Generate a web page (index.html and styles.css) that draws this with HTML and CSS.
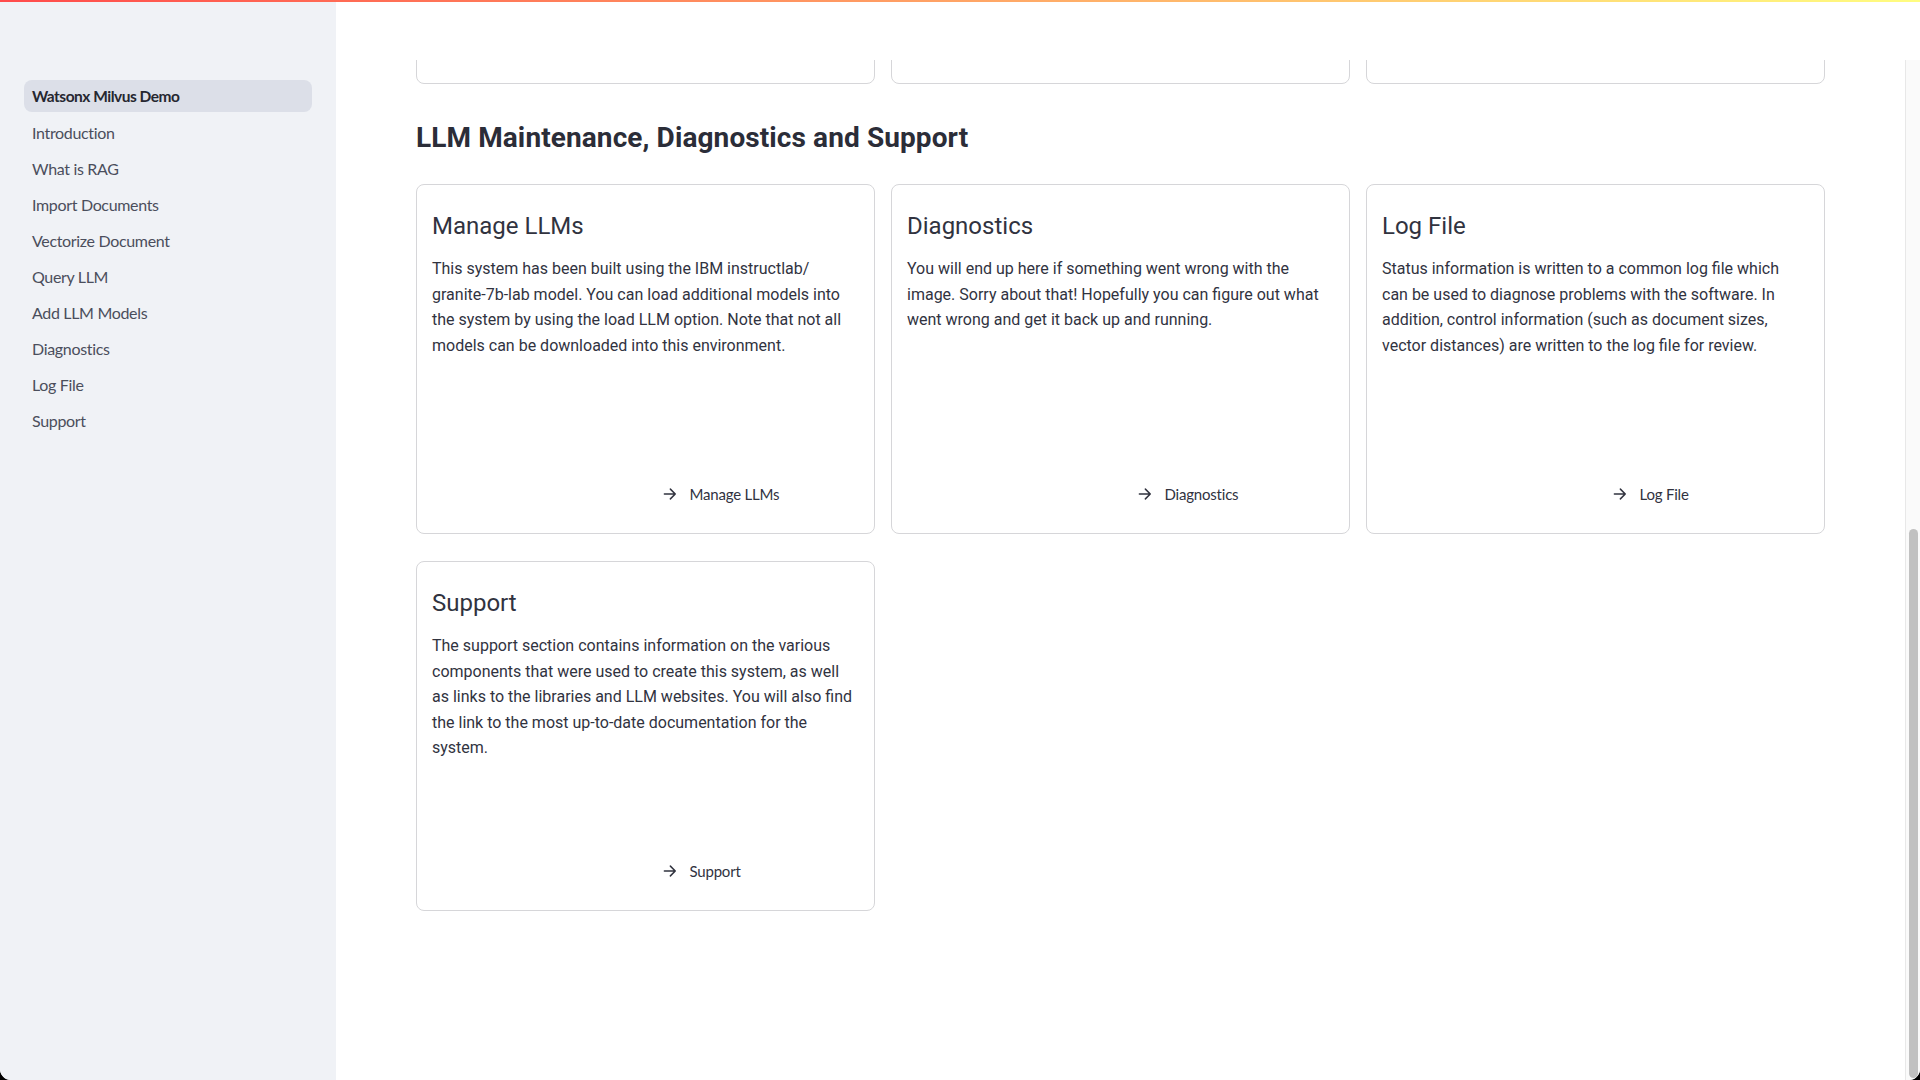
FILE: index.html
```html
<!DOCTYPE html>
<html lang="en">
<head>
<meta charset="utf-8">
<title>Watsonx Milvus Demo</title>
<link rel="stylesheet" href="styles.css">
</head>
<body>
<div class="app">
  <div class="decoration"></div>
  <aside class="sidebar">
    <nav class="nav">
      <a class="nav-item active">Watsonx Milvus Demo</a>
      <a class="nav-item">Introduction</a>
      <a class="nav-item">What is RAG</a>
      <a class="nav-item">Import Documents</a>
      <a class="nav-item">Vectorize Document</a>
      <a class="nav-item">Query LLM</a>
      <a class="nav-item">Add LLM Models</a>
      <a class="nav-item">Diagnostics</a>
      <a class="nav-item">Log File</a>
      <a class="nav-item">Support</a>
    </nav>
  </aside>
  <div class="main">
    <main class="viewport">
      <div class="block">
        <div class="row">
          <section class="card"></section>
          <section class="card"></section>
          <section class="card"></section>
        </div>

        <h2 class="section-title">LLM Maintenance, Diagnostics and Support</h2>

        <div class="row">
          <section class="card">
            <h3 class="card-title">Manage LLMs</h3>
            <div class="card-body"><p>This system has been built using the IBM instructlab/<wbr>granite-7b-lab model. You can load additional models into the system by using the load LLM option. Note that not all models can be downloaded into this environment.</p></div>
            <div class="card-foot"><span></span><a class="page-link"><svg viewBox="0 0 24 24"><path d="M4.5 12h14.5M12.5 5.5 19 12l-6.5 6.5"/></svg>Manage LLMs</a></div>
          </section>
          <section class="card">
            <h3 class="card-title">Diagnostics</h3>
            <div class="card-body"><p>You will end up here if something went wrong with the image. Sorry about that! Hopefully you can figure out what went wrong and get it back up and running.</p></div>
            <div class="card-foot"><span></span><a class="page-link"><svg viewBox="0 0 24 24"><path d="M4.5 12h14.5M12.5 5.5 19 12l-6.5 6.5"/></svg>Diagnostics</a></div>
          </section>
          <section class="card">
            <h3 class="card-title">Log File</h3>
            <div class="card-body"><p>Status information is written to a common log file which can be used to diagnose problems with the software. In addition, control information (such as document sizes, vector distances) are written to the log file for review.</p></div>
            <div class="card-foot"><span></span><a class="page-link"><svg viewBox="0 0 24 24"><path d="M4.5 12h14.5M12.5 5.5 19 12l-6.5 6.5"/></svg>Log File</a></div>
          </section>
        </div>

        <div class="row">
          <section class="card">
            <h3 class="card-title">Support</h3>
            <div class="card-body"><p>The support section contains information on the various components that were used to create this system, as well as links to the libraries and LLM websites. You will also find the link to the most up-to-date documentation for the system.</p></div>
            <div class="card-foot"><span></span><a class="page-link"><svg viewBox="0 0 24 24"><path d="M4.5 12h14.5M12.5 5.5 19 12l-6.5 6.5"/></svg>Support</a></div>
          </section>
        </div>
      </div>
    </main>
    <div class="scrollbar"><div class="thumb"></div></div>
  </div>
  <header class="header"></header>
</div>
</body>
</html>
```
FILE: styles.css
```css
* { box-sizing: border-box; }

html, body {
  margin: 0;
  padding: 0;
  height: 100%;
  background: #000;
}

body {
  font-family: Roboto, "Liberation Sans", sans-serif;
  color: #31333f;
}

.app {
  position: relative;
  display: flex;
  width: 100%;
  height: 100vh;
  background: #fff;
  border-radius: 0 0 11px 11px;
  overflow: hidden;
}

.decoration {
  position: absolute;
  top: 0;
  left: 0;
  right: 0;
  height: 2px;
  background: linear-gradient(90deg, #ff4b4b, #fffd80);
  z-index: 30;
}

.header {
  position: absolute;
  top: 0;
  left: 336px;
  right: 0;
  height: 60px;
  background: #fff;
  z-index: 20;
}

/* Sidebar */
.sidebar {
  flex: 0 0 336px;
  height: 100%;
  background: #f0f2f6;
}

.nav {
  display: flex;
  flex-direction: column;
  gap: 4px;
  padding: 80px 24px 0;
}

.nav-item {
  display: flex;
  align-items: center;
  height: 32px;
  padding: 0 8px;
  border-radius: 8px;
  font-family: Lato, "Noto Sans", sans-serif;
  font-size: 16px;
  letter-spacing: -0.33px;
  color: #4b4e5c;
  text-decoration: none;
}

.nav-item.active {
  background: #dcdfe8;
  color: #262730;
  font-weight: 700;
  font-size: 15.5px;
  letter-spacing: -0.5px;
}

/* Main area */
.main {
  flex: 1;
  height: 100%;
  display: flex;
  min-width: 0;
}

.viewport {
  flex: 1;
  min-width: 0;
  height: 100%;
  overflow: hidden;
  display: flex;
  flex-direction: column-reverse;
}

.scrollbar {
  flex: 0 0 15px;
  height: 100%;
  background: #fafafa;
  border-left: 1px solid #e8e8e8;
  display: flex;
  flex-direction: column;
  justify-content: flex-end;
  padding: 0 2px 2px 3px;
}

.thumb {
  height: 549px;
  background: #c1c1c1;
  border-radius: 5px;
}

.block {
  flex-shrink: 0;
  display: flex;
  flex-direction: column;
  gap: 27px;
  padding: 0 80px 169px;
}

.section-title {
  margin: 10px 0 2px;
  font-size: 28px;
  line-height: 34px;
  font-weight: 700;
  color: #2b2d38;
  letter-spacing: 0.1px;
}

.row {
  display: grid;
  grid-template-columns: repeat(3, 1fr);
  gap: 16px;
}

.card {
  height: 350px;
  border: 1px solid #d6d6d9;
  border-radius: 8px;
  padding: 15px 19px 19px 15px;
  display: flex;
  flex-direction: column;
}

.card-title {
  margin: 12px 0 15px;
  font-size: 24px;
  line-height: 29px;
  font-weight: 400;
  color: #31333f;
}

.card-body {
  flex: 1;
}

.card-body p {
  margin: 0;
  font-size: 16px;
  line-height: 25.6px;
}

.card-foot {
  display: grid;
  grid-template-columns: 1fr 1fr;
  gap: 16px;
  height: 40px;
  align-items: center;
}

.page-link {
  display: flex;
  align-items: center;
  gap: 11px;
  padding-left: 9px;
  font-family: Lato, "Noto Sans", sans-serif;
  font-size: 15px;
  letter-spacing: -0.2px;
  color: #31333f;
  text-decoration: none;
}

.page-link svg {
  width: 18px;
  height: 18px;
  flex: 0 0 18px;
  fill: none;
  stroke: #31333f;
  stroke-width: 2;
  stroke-linecap: round;
  stroke-linejoin: round;
}
```
